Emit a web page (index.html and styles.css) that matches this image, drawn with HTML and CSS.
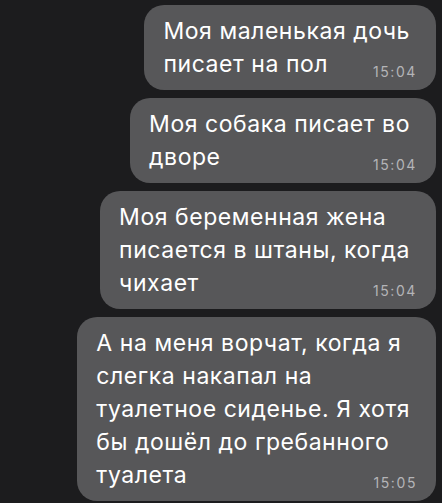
FILE: index.html
```html
<!DOCTYPE html>
<html lang="ru">
<head>
    <meta charset="UTF-8">
    <meta name="viewport" content="width=device-width, initial-scale=1.0">
    <title>Чат</title>
    <link rel="stylesheet" href="styles.css">
</head>
<body>
    <div class="chat">
        <div class="msg">
            <p class="text">Моя маленькая дочь<br>писает на пол<span class="time">15:04</span></p>
        </div>
        <div class="msg">
            <p class="text">Моя собака писает во<br>дворе<span class="time">15:04</span></p>
        </div>
        <div class="msg">
            <p class="text">Моя беременная жена<br>писается в штаны, когда<br>чихает<span class="time">15:04</span></p>
        </div>
        <div class="msg">
            <p class="text">А на меня ворчат, когда я<br>слегка накапал на<br>туалетное сиденье. Я хотя<br>бы дошёл до гребанного<br>туалета<span class="time">15:05</span></p>
        </div>
    </div>
</body>
</html>
```

FILE: styles.css
```css
body {
    margin: 0;
    background-color: #1c1c1e;
    font-family: Inter, "Noto Sans", sans-serif;
    overflow: hidden;
}

.chat {
    display: flex;
    flex-direction: column;
    align-items: flex-end;
    gap: 8px;
    padding: 5px 6px 0 0;
}

.msg {
    background-color: #575759;
    border-radius: 20px;
    padding: 10px 26px 9px 19px;
}

.text {
    margin: 0;
    color: #ffffff;
    font-size: 23px;
    line-height: 33px;
    letter-spacing: 0.55px;
    white-space: nowrap;
}

/* time sits on the last line, pushed to the right edge */
.time {
    float: right;
    margin: 17px -7px 0 12px;
    font-size: 14px;
    line-height: 14px;
    letter-spacing: 1.6px;
    color: #b4b4b7;
}
```
